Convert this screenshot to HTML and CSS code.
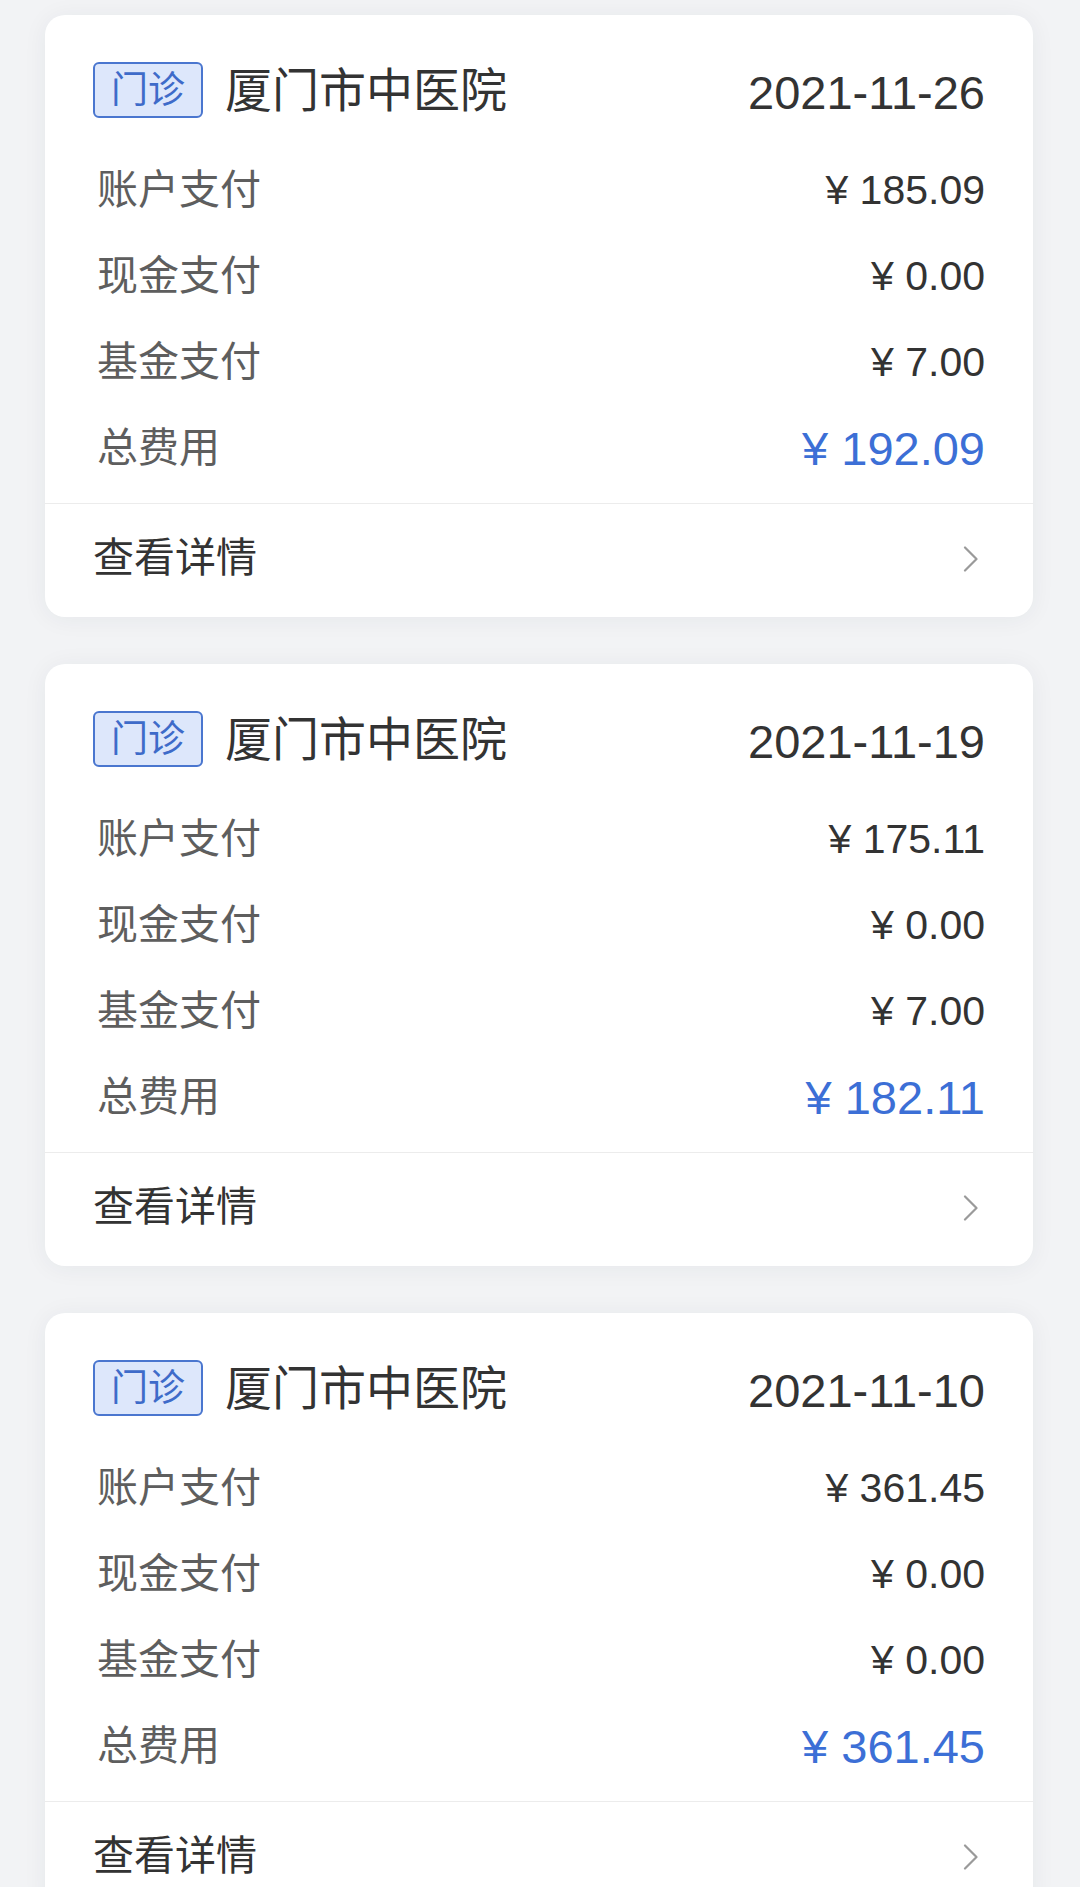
FILE: index.html
```html
<!DOCTYPE html>
<html lang="zh-CN">
<head>
    <meta charset="UTF-8">
    <meta name="viewport" content="width=device-width, initial-scale=1.0">
    <title>就诊记录</title>
    <link rel="stylesheet" href="styles.css">
</head>
<body>
    <div class="record-list">
        <div class="record-card">
            <div class="record-head">
                <span class="visit-tag">门诊</span>
                <span class="hospital">厦门市中医院</span>
                <span class="visit-date">2021-11-26</span>
            </div>
            <ul class="fee-list">
                <li class="fee-row"><span class="fee-label">账户支付</span><span class="fee-value">¥ 185.09</span></li>
                <li class="fee-row"><span class="fee-label">现金支付</span><span class="fee-value">¥ 0.00</span></li>
                <li class="fee-row"><span class="fee-label">基金支付</span><span class="fee-value">¥ 7.00</span></li>
                <li class="fee-row total"><span class="fee-label">总费用</span><span class="fee-value">¥ 192.09</span></li>
            </ul>
            <a class="detail-link" href="#">
                <span>查看详情</span>
                <svg class="chevron" width="16" height="26" viewBox="0 0 16 26"><path d="M2 1.5 L13.5 13 L2 24.5" fill="none" stroke="#9a9a9a" stroke-width="2.2" stroke-linecap="round" stroke-linejoin="round"/></svg>
            </a>
        </div>

        <div class="record-card">
            <div class="record-head">
                <span class="visit-tag">门诊</span>
                <span class="hospital">厦门市中医院</span>
                <span class="visit-date">2021-11-19</span>
            </div>
            <ul class="fee-list">
                <li class="fee-row"><span class="fee-label">账户支付</span><span class="fee-value">¥ 175.11</span></li>
                <li class="fee-row"><span class="fee-label">现金支付</span><span class="fee-value">¥ 0.00</span></li>
                <li class="fee-row"><span class="fee-label">基金支付</span><span class="fee-value">¥ 7.00</span></li>
                <li class="fee-row total"><span class="fee-label">总费用</span><span class="fee-value">¥ 182.11</span></li>
            </ul>
            <a class="detail-link" href="#">
                <span>查看详情</span>
                <svg class="chevron" width="16" height="26" viewBox="0 0 16 26"><path d="M2 1.5 L13.5 13 L2 24.5" fill="none" stroke="#9a9a9a" stroke-width="2.2" stroke-linecap="round" stroke-linejoin="round"/></svg>
            </a>
        </div>

        <div class="record-card">
            <div class="record-head">
                <span class="visit-tag">门诊</span>
                <span class="hospital">厦门市中医院</span>
                <span class="visit-date">2021-11-10</span>
            </div>
            <ul class="fee-list">
                <li class="fee-row"><span class="fee-label">账户支付</span><span class="fee-value">¥ 361.45</span></li>
                <li class="fee-row"><span class="fee-label">现金支付</span><span class="fee-value">¥ 0.00</span></li>
                <li class="fee-row"><span class="fee-label">基金支付</span><span class="fee-value">¥ 0.00</span></li>
                <li class="fee-row total"><span class="fee-label">总费用</span><span class="fee-value">¥ 361.45</span></li>
            </ul>
            <a class="detail-link" href="#">
                <span>查看详情</span>
                <svg class="chevron" width="16" height="26" viewBox="0 0 16 26"><path d="M2 1.5 L13.5 13 L2 24.5" fill="none" stroke="#9a9a9a" stroke-width="2.2" stroke-linecap="round" stroke-linejoin="round"/></svg>
            </a>
        </div>
    </div>
</body>
</html>
```

FILE: styles.css
```css
body {
    margin: 0;
    background-color: #f2f3f5;
    font-family: "Liberation Sans", "Noto Sans CJK SC", sans-serif;
    color: #333;
}
.record-list {
    padding: 15px 47px 0 45px;
}
.record-card {
    background-color: #fff;
    border-radius: 20px;
    box-shadow: 0 2px 24px rgba(30, 45, 70, 0.06);
    margin-bottom: 47px;
    overflow: hidden;
}
.record-head {
    display: flex;
    align-items: center;
    height: 56px;
    padding: 47px 48px 0 48px;
    margin-bottom: 29px;
}
.visit-tag {
    box-sizing: border-box;
    height: 56px;
    padding: 0 16px;
    display: flex;
    align-items: center;
    border: 2px solid #4a76cf;
    border-radius: 6px;
    background-color: #dde7fb;
    color: #3e6bc9;
    font-size: 37px;
    line-height: 1;
}
.hospital {
    margin-left: 22px;
    font-size: 47px;
    line-height: 1;
    color: #333;
}
.visit-date {
    margin-left: auto;
    font-size: 47px;
    line-height: 1;
    color: #333;
    margin-top: 4px;
}
.fee-list {
    list-style: none;
    margin: 0;
    padding: 0 48px 12px 48px;
    border-bottom: 1px solid #ececec;
}
.fee-row {
    display: flex;
    align-items: center;
    justify-content: space-between;
    height: 86px;
}
.fee-label {
    padding-left: 4px;
    font-size: 41px;
    line-height: 1;
    color: #5e5e5e;
}
.fee-value {
    font-size: 41px;
    line-height: 1;
    color: #333;
}
.fee-row.total .fee-value {
    font-size: 47px;
    color: #3c6fd6;
}
.detail-link {
    display: flex;
    align-items: center;
    justify-content: space-between;
    height: 113px;
    padding: 0 54px 4px 48px;
    box-sizing: border-box;
    text-decoration: none;
    color: #333;
    font-size: 41px;
    line-height: 1;
}
```
